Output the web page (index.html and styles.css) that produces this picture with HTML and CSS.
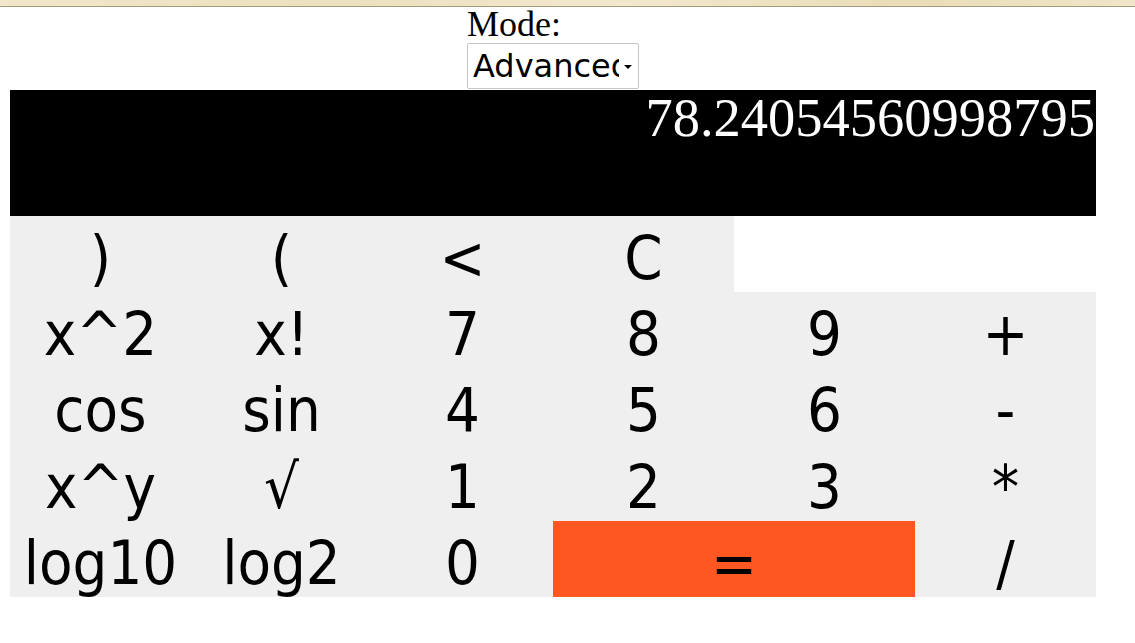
FILE: index.html
```html
<!DOCTYPE html>
<html>
<head>
<meta charset="utf-8">
<title>Calculator</title>
<link rel="stylesheet" href="styles.css">
</head>
<body>
<div class="topstrip"></div>
<main class="calc">
  <div class="mode-row">
    <div class="mode">
      <label class="mode-label" for="mode">Mode:</label>
      <span class="select-wrap">
        <select id="mode" class="mode-select">
          <option>Advanced</option>
          <option>Basic</option>
        </select>
      </span>
    </div>
  </div>
  <div class="display">78.24054560998795</div>
  <div class="keys">
    <button class="key">)</button>
    <button class="key">(</button>
    <button class="key">&lt;</button>
    <button class="key">C</button>
    <div class="blank"></div>
    <button class="key">x^2</button>
    <button class="key">x!</button>
    <button class="key">7</button>
    <button class="key">8</button>
    <button class="key">9</button>
    <button class="key">+</button>
    <button class="key">cos</button>
    <button class="key">sin</button>
    <button class="key">4</button>
    <button class="key">5</button>
    <button class="key">6</button>
    <button class="key">-</button>
    <button class="key">x^y</button>
    <button class="key">√</button>
    <button class="key">1</button>
    <button class="key">2</button>
    <button class="key">3</button>
    <button class="key">*</button>
    <button class="key">log10</button>
    <button class="key">log2</button>
    <button class="key">0</button>
    <button class="key equals">=</button>
    <button class="key">/</button>
  </div>
</main>
</body>
</html>
```
FILE: styles.css
```css
html, body {
  margin: 0;
  padding: 0;
  background: #ffffff;
}

.topstrip {
  height: 6px;
  background: linear-gradient(90deg, #f1e6c9 0%, #ece0bf 30%, #f2e8cd 55%, #eadcb8 80%, #f0e5c8 100%);
  border-bottom: 1px solid #a9997b;
}

.calc {
  width: 1086px;
  margin-left: 10px;
}

.mode-row {
  text-align: center;
}

.mode {
  display: inline-flex;
  flex-direction: column;
  align-items: flex-start;
  text-align: left;
}

.mode-label {
  font-family: "Liberation Serif", "Times New Roman", serif;
  font-size: 36px;
  line-height: 35px;
  color: #000;
}

.select-wrap {
  position: relative;
  display: block;
  margin-top: 1px;
}

.mode-select {
  -webkit-appearance: none;
  appearance: none;
  display: block;
  box-sizing: border-box;
  width: 172px;
  height: 46px;
  margin: 0 0 1px 0;
  padding: 0 19px 0 5px;
  border: 1px solid #c4c4c4;
  border-radius: 2px;
  background: #ffffff;
  color: #000;
  font-family: "DejaVu Sans", "Verdana", sans-serif;
  font-size: 32px;
  overflow: hidden;
}

.select-wrap::after {
  content: "";
  position: absolute;
  left: 157px;
  top: 22px;
  width: 0;
  height: 0;
  border-left: 4px solid transparent;
  border-right: 4px solid transparent;
  border-top: 4px solid #000;
  pointer-events: none;
}

.display {
  height: 126px;
  box-sizing: border-box;
  background: #000;
  color: #fff;
  text-align: right;
  font-family: "Liberation Serif", "Times New Roman", serif;
  font-size: 54.5px;
  line-height: 54px;
  padding: 1px 1px 0 0;
  overflow: hidden;
}

.keys {
  display: grid;
  grid-template-columns: repeat(6, 181px);
  grid-template-rows: repeat(5, 76.2px);
  background: #efefef;
}

.key {
  -webkit-appearance: none;
  appearance: none;
  margin: 0;
  border: 0;
  border-radius: 0;
  background: #efefef;
  color: #000;
  font-family: "DejaVu Sans Condensed", "DejaVu Sans", sans-serif;
  font-stretch: condensed;
  font-size: 61px;
  line-height: 68px;
  padding: 8px 0 0 0;
  display: block;
  text-align: center;
  overflow: hidden;
  box-sizing: border-box;
  height: 76.2px;
  align-self: start;
}

.blank {
  grid-column: span 2;
  background: #ffffff;
}

.equals {
  grid-column: span 2;
  background: #ff5722;
}
```
